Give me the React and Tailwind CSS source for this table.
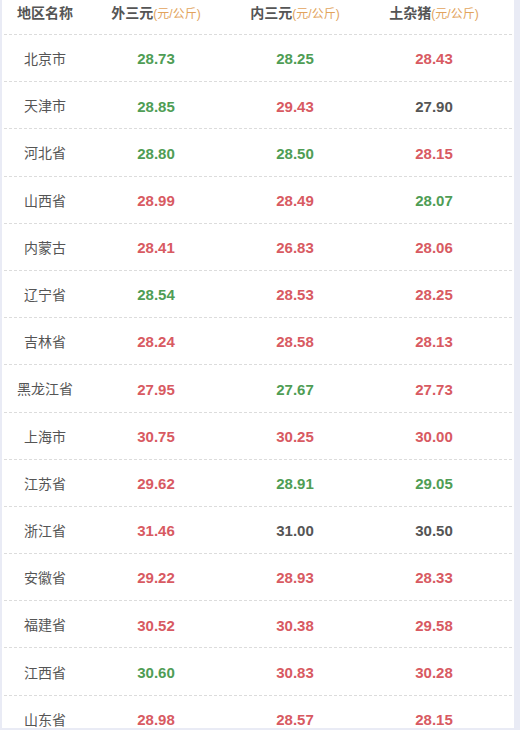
import React from "react";

const G = "text-[#4f9d55]";
const R = "text-[#d85a62]";
const K = "text-[#555555]";

const rows = [
  ["北京市", ["28.73", G], ["28.25", G], ["28.43", R]],
  ["天津市", ["28.85", G], ["29.43", R], ["27.90", K]],
  ["河北省", ["28.80", G], ["28.50", G], ["28.15", R]],
  ["山西省", ["28.99", R], ["28.49", R], ["28.07", G]],
  ["内蒙古", ["28.41", R], ["26.83", R], ["28.06", R]],
  ["辽宁省", ["28.54", G], ["28.53", R], ["28.25", R]],
  ["吉林省", ["28.24", R], ["28.58", R], ["28.13", R]],
  ["黑龙江省", ["27.95", R], ["27.67", G], ["27.73", R]],
  ["上海市", ["30.75", R], ["30.25", R], ["30.00", R]],
  ["江苏省", ["29.62", R], ["28.91", G], ["29.05", G]],
  ["浙江省", ["31.46", R], ["31.00", K], ["30.50", K]],
  ["安徽省", ["29.22", R], ["28.93", R], ["28.33", R]],
  ["福建省", ["30.52", R], ["30.38", R], ["29.58", R]],
  ["江西省", ["30.60", G], ["30.83", R], ["30.28", R]],
  ["山东省", ["28.98", R], ["28.57", R], ["28.15", R]],
];

const grid = "grid grid-cols-[82px_140px_138px_140px_1fr] mx-[2px] border-b border-dashed border-[#dcdcdc]";

const Head = ({ name }) => (
  <div className="text-center whitespace-nowrap">
    <span className="text-[14px] font-bold text-[#555]">{name}</span>
    <span className="text-[12px] text-[#e2a35c]">(元/公斤)</span>
  </div>
);

export default function App() {
  return (
    <div
      className="w-[520px] h-[730px] overflow-hidden bg-white border-l-2 border-r-[6px] border-b-2 border-[#e9ebf5]"
      style={{ fontFamily: '"Liberation Sans", "Noto Sans CJK SC", sans-serif' }}
    >
      <div className={`${grid} h-[35px] items-start pt-[2px] leading-[22px]`}>
        <div className="text-center text-[14px] font-bold text-[#555]">地区名称</div>
        <Head name="外三元" />
        <Head name="内三元" />
        <Head name="土杂猪" />
      </div>
      {rows.map(([name, a, b, c]) => (
        <div key={name} className={`${grid} h-[47.2px] shrink-0 items-center pt-[3px]`}>
          <div className="text-center text-[14px] text-[#555]">{name}</div>
          {[a, b, c].map(([v, col], i) => (
            <div key={i} className={`text-center text-[15px] font-bold ${col}`}>
              {v}
            </div>
          ))}
        </div>
      ))}
    </div>
  );
}
